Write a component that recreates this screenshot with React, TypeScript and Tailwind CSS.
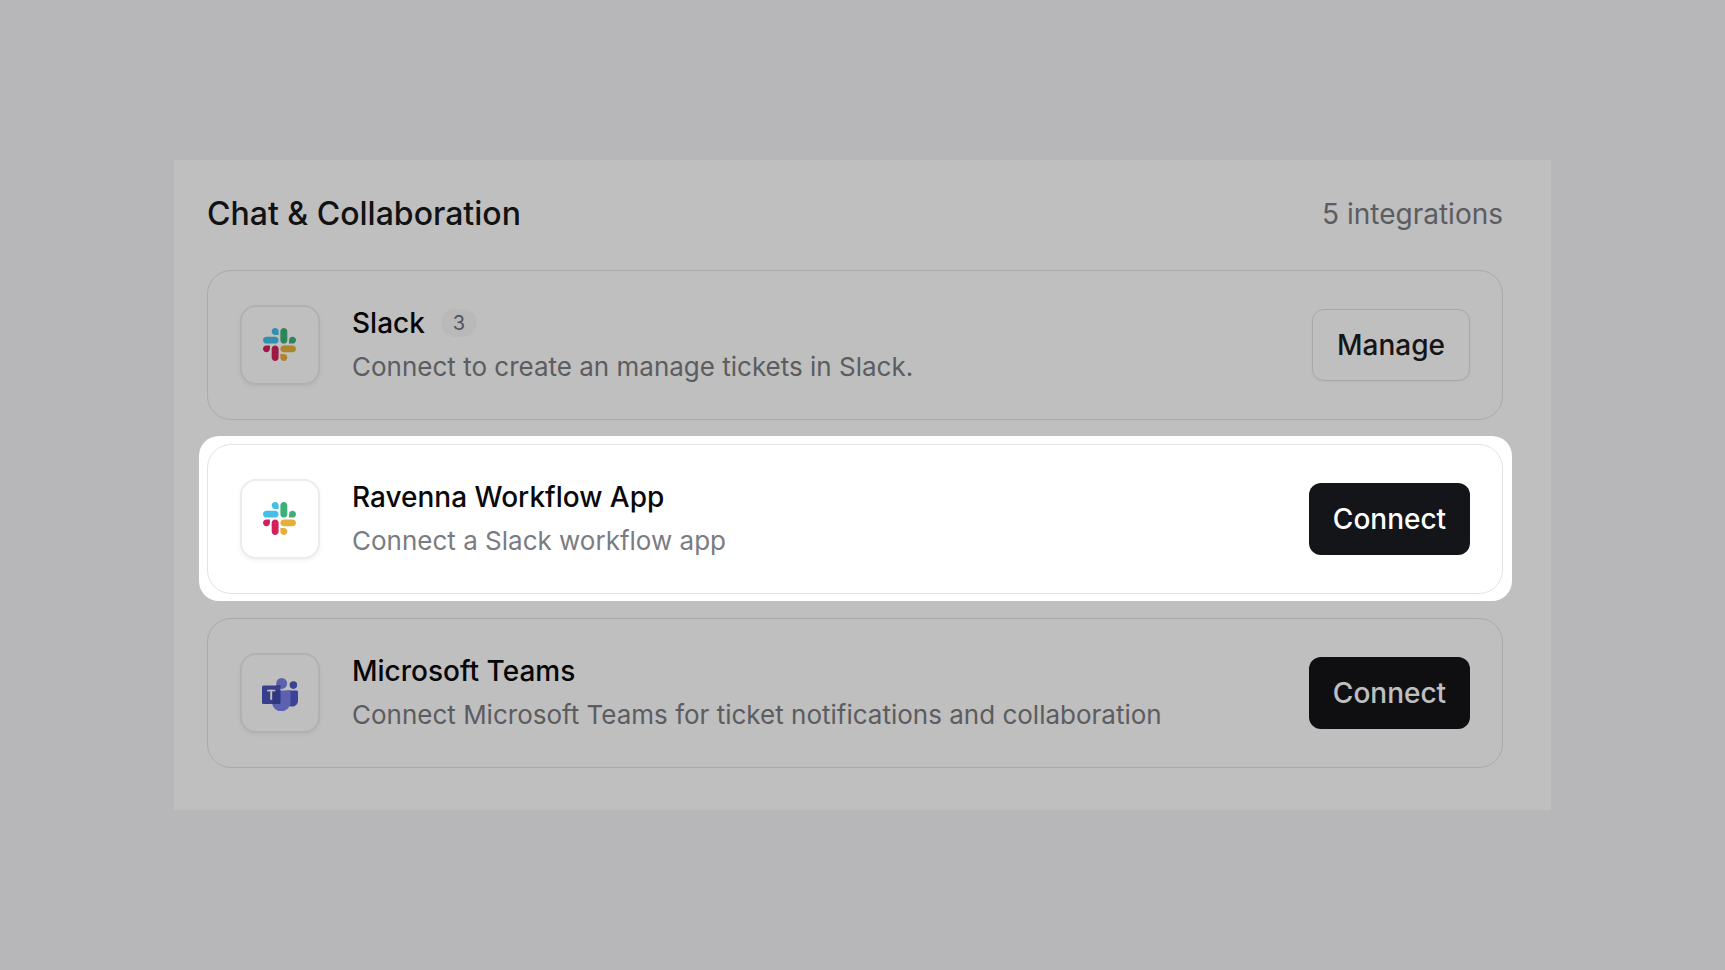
import type { ReactNode } from "react";

function SlackLogo() {
  return (
    <svg viewBox="0 0 122.8 122.8" className="mr-px mb-px size-[33px]">
      <path fill="#D3215C" d="M25.8 77.6c0 7.1-5.8 12.9-12.9 12.9S0 84.7 0 77.6s5.8-12.9 12.9-12.9h12.9v12.9zm6.5 0c0-7.1 5.8-12.9 12.9-12.9s12.9 5.8 12.9 12.9v32.3c0 7.1-5.8 12.9-12.9 12.9s-12.9-5.8-12.9-12.9V77.6z" />
      <path fill="#45BFE8" d="M45.2 25.8c-7.1 0-12.9-5.8-12.9-12.9S38.1 0 45.2 0s12.9 5.8 12.9 12.9v12.9H45.2zm0 6.5c7.1 0 12.9 5.8 12.9 12.9s-5.8 12.9-12.9 12.9H12.9C5.8 58.1 0 52.3 0 45.2s5.8-12.9 12.9-12.9h32.3z" />
      <path fill="#3DB079" d="M97 45.2c0-7.1 5.8-12.9 12.9-12.9s12.9 5.8 12.9 12.9-5.8 12.9-12.9 12.9H97V45.2zm-6.5 0c0 7.1-5.8 12.9-12.9 12.9s-12.9-5.8-12.9-12.9V12.9C64.7 5.8 70.5 0 77.6 0s12.9 5.8 12.9 12.9v32.3z" />
      <path fill="#E5B03A" d="M77.6 97c7.1 0 12.9 5.8 12.9 12.9s-5.8 12.9-12.9 12.9-12.9-5.8-12.9-12.9V97h12.9zm0-6.5c-7.1 0-12.9-5.8-12.9-12.9s5.8-12.9 12.9-12.9h32.3c7.1 0 12.9 5.8 12.9 12.9s-5.8 12.9-12.9 12.9H77.6z" />
    </svg>
  );
}

function TeamsLogo() {
  return (
    <svg viewBox="0 0 2228.8 2073.3" className="mt-[3px] h-[33.5px] w-9">
      <path fill="#5059C9" d="M1554.6 777.5h575.7c54.4 0 98.5 44.1 98.5 98.5v524.4c0 199.9-162 361.9-361.9 361.9h-1.7c-199.9 0-362-162-362-361.9V829c0-28.5 23-51.5 51.4-51.5z" />
      <circle fill="#5059C9" cx="1943.8" cy="440.6" r="233.3" />
      <circle fill="#7B83EB" cx="1218.1" cy="336.9" r="336.9" />
      <path fill="#7B83EB" d="M1667.3 777.5H717c-53.7 1.3-96.2 45.9-95 99.7v598.1c-7.5 322.5 247.7 590.1 570.2 598 322.5-7.9 577.6-275.5 570.1-598V877.2c1.3-53.8-41.2-98.4-95-99.7z" />
      <path fill="#4A52BB" d="M895 440h245c20 90 0 170-60 234H895z" />
      <rect fill="#4B53BC" y="466.5" width="1140.3" height="1140.3" rx="95" />
      <path fill="#3D449E" d="M622 777.5h518.3v734.3c0 52.5-42.5 95-95 95H640c-14-60-18-100-18-150z" opacity=".55" />
      <rect fill="#fff" x="320.1" y="727.8" width="500.1" height="100.4" />
      <rect fill="#fff" x="509.2" y="727.8" width="121" height="617.7" />
    </svg>
  );
}

type CardProps = {
  icon: ReactNode;
  title: string;
  description: string;
  action: "Connect" | "Manage";
  count?: number;
  spotlight?: boolean;
};

function IntegrationCard({ icon, title, description, action, count, spotlight }: CardProps) {
  return (
    <div className="relative flex h-[150px] items-center rounded-3xl border border-[#e3e3e5] px-8">
      <div className="flex size-20 shrink-0 items-center justify-center rounded-2xl border-2 border-[#ececed] bg-white shadow-[0_2px_4px_rgba(0,0,0,0.05)]">
        {icon}
      </div>
      <div className="ml-8 flex flex-1 flex-col">
        <div className="flex h-11 items-center gap-4">
          <h3 className="text-[28px] leading-10 font-medium text-[#09090b]">{title}</h3>
          {count !== undefined && (
            <span className="flex h-7 w-9 items-center justify-center rounded-full bg-[#f7f7f8] text-xl text-[#71717a]">{count}</span>
          )}
        </div>
        <p className="h-11 text-[26px] leading-[44px] text-[#7b7b82]">{description}</p>
      </div>
      {action === "Connect" ? (
        <button className="h-[72px] w-[161px] rounded-xl bg-[#141519] text-[28px] font-medium text-white">Connect</button>
      ) : (
        <button className="h-[72px] w-[158px] rounded-xl border border-[#e0e0e2] bg-white text-[28px] font-medium text-[#1c1c20] shadow-[0_1px_3px_rgba(0,0,0,0.05)]">Manage</button>
      )}
      {spotlight && (
        <div className="pointer-events-none absolute -top-[9px] -right-[9.5px] -bottom-[7.5px] -left-[9px] z-10 rounded-[20px] shadow-[0_0_0_2000px_rgba(0,0,0,0.25)]" />
      )}
    </div>
  );
}

export default function App() {
  return (
    <main className="flex h-[970px] w-[1725px] items-center justify-center overflow-hidden bg-[#f4f4f7] font-['Inter',sans-serif]">
      <section className="h-[650px] w-[1377px] bg-white pr-12 pl-[33px]">
        <header className="flex h-[110px] items-center justify-between pb-0.5">
          <h2 className="text-[32px] leading-10 font-medium text-[#18181b]">Chat &amp; Collaboration</h2>
          <span className="text-[28px] leading-10 text-[#7b7b82]">5 integrations</span>
        </header>
        <div className="flex flex-col gap-6">
          <IntegrationCard icon={<SlackLogo />} title="Slack" count={3} description="Connect to create an manage tickets in Slack." action="Manage" />
          <IntegrationCard icon={<SlackLogo />} title="Ravenna Workflow App" description="Connect a Slack workflow app" action="Connect" spotlight />
          <IntegrationCard icon={<TeamsLogo />} title="Microsoft Teams" description="Connect Microsoft Teams for ticket notifications and collaboration" action="Connect" />
        </div>
      </section>
    </main>
  );
}
